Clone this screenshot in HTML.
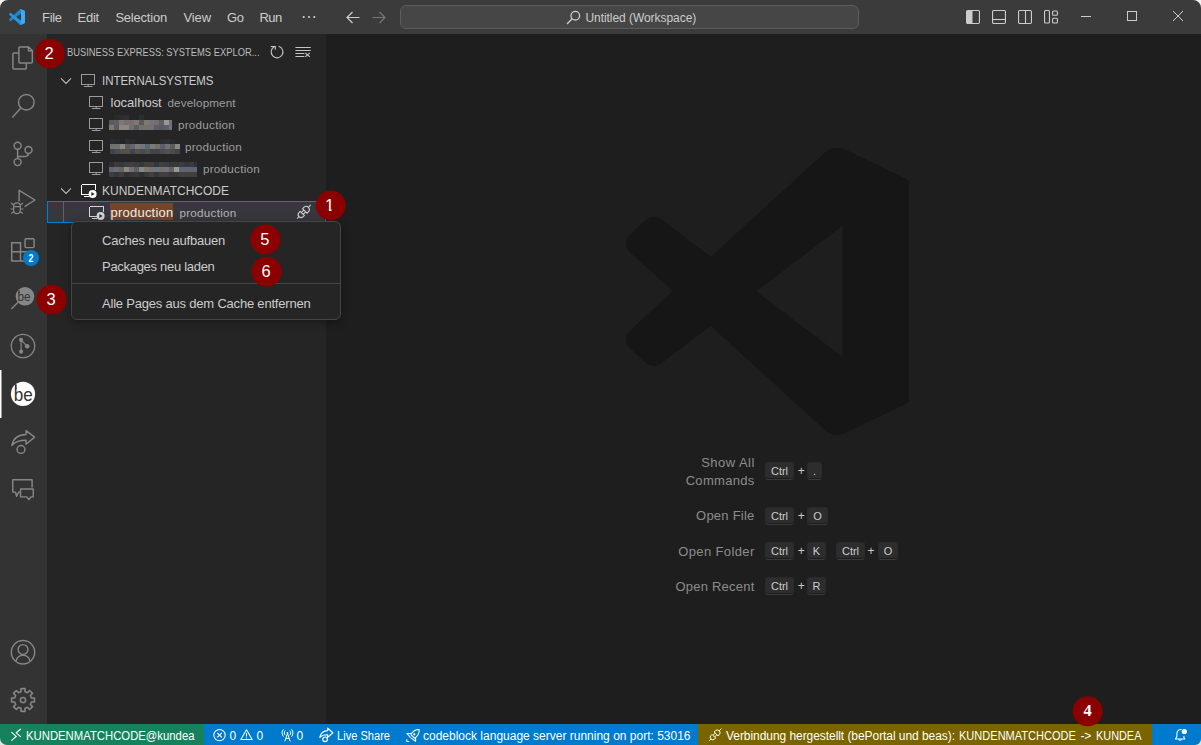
<!DOCTYPE html>
<html lang="en">
<head>
<meta charset="utf-8">
<title>Untitled (Workspace)</title>
<style>
*{box-sizing:border-box;margin:0;padding:0}
html,body{width:1201px;height:745px;overflow:hidden;background:#1e1e1e}
body{font-family:"Liberation Sans",sans-serif;font-size:13px;color:#ccc;position:relative;-webkit-font-smoothing:antialiased}
.abs,.t{position:absolute;white-space:pre}
.t{line-height:1}
svg{position:absolute;overflow:visible}
#titlebar{position:absolute;left:0;top:0;width:1201px;height:34px;background:#3b3b3b}
#activity{position:absolute;left:0;top:34px;width:47px;height:690px;background:#333333}
#sidebar{position:absolute;left:47px;top:34px;width:279px;height:690px;background:#252526}
#editor{position:absolute;left:326px;top:34px;width:875px;height:690px;background:#1e1e1e}
#status{position:absolute;left:0;top:724px;width:1201px;height:21px;background:#007acc;color:#fff;font-size:12px}
.menu{font-size:13px;color:#cccccc}
.key{position:absolute;height:18px;border-radius:3px;background:#2d2d2d;border:1px solid #2a2a2a;border-bottom-color:#3a3a3a;box-shadow:inset 0 -1px 0 rgba(0,0,0,.36);font-size:11px;color:#ccc;text-align:center;line-height:16px}
.plus{position:absolute;font-size:12px;color:#ccc;line-height:1}
.wl{position:absolute;color:#8c8c8c;font-size:13px;line-height:1;white-space:pre}
.desc{color:#9d9d9d;font-size:11.7px}
</style>
</head>
<body>
<!-- TITLEBAR -->
<div id="titlebar">
<svg style="left:9px;top:9px" width="16" height="16" viewBox="0 0 100 100"><path d="M96.4614 10.7962L75.8569 0.875542C73.4719 -0.272773 70.6217 0.211611 68.75 2.08333L1.29858 63.5832C-0.515693 65.2373 -0.513607 68.0937 1.30308 69.7452L6.81272 74.754C8.29793 76.1042 10.5347 76.2036 12.1338 74.9905L93.3609 13.3699C96.086 11.3026 100 13.2462 100 16.6667V16.4275C100 14.0265 98.6246 11.8378 96.4614 10.7962Z" fill="#1f84cc"/><path d="M96.4614 89.2038L75.8569 99.1245C73.4719 100.273 70.6217 99.7884 68.75 97.9167L1.29858 36.4169C-0.515693 34.7627 -0.513607 31.9063 1.30308 30.2548L6.81272 25.246C8.29793 23.8958 10.5347 23.7964 12.1338 25.0095L93.3609 86.6301C96.086 88.6974 100 86.7538 100 83.3334V83.5726C100 85.9735 98.6246 88.1622 96.4614 89.2038Z" fill="#2196e6"/><path d="M75.8578 99.1263C73.4721 100.274 70.6219 99.7885 68.75 97.9166C71.0564 100.223 75 98.5895 75 95.3278V4.67213C75 1.41039 71.0564 -0.223106 68.75 2.08329C70.6219 0.211402 73.4721 -0.273666 75.8578 0.873633L96.4587 10.7807C98.6234 11.8217 100 14.0112 100 16.4132V83.5871C100 85.9891 98.6234 88.1786 96.4586 89.2196L75.8578 99.1263Z" fill="#38abff"/></svg>
<span class="t menu" style="left:42px;top:11px;letter-spacing:-.29px">File</span>
<span class="t menu" style="left:77.5px;top:11px;letter-spacing:-.23px">Edit</span>
<span class="t menu" style="left:115.4px;top:11px;letter-spacing:-.21px">Selection</span>
<span class="t menu" style="left:183.5px;top:11px;letter-spacing:-.11px">View</span>
<span class="t menu" style="left:227px;top:11px;letter-spacing:-.47px">Go</span>
<span class="t menu" style="left:259.6px;top:11px;letter-spacing:-.62px">Run</span>
<svg style="left:302px;top:15px" width="14" height="4" viewBox="0 0 14 4"><circle cx="1.7" cy="2" r="1.1" fill="#ccc"/><circle cx="7" cy="2" r="1.1" fill="#ccc"/><circle cx="12.3" cy="2" r="1.1" fill="#ccc"/></svg>
<svg style="left:346px;top:11px" width="14" height="13" viewBox="0 0 14 13" fill="none" stroke="#cccccc" stroke-width="1.2"><path d="M6.5 1 L1 6.5 L6.5 12 M1 6.5 H13.5"/></svg>
<svg style="left:372px;top:11px" width="14" height="13" viewBox="0 0 14 13" fill="none" stroke="#777" stroke-width="1.2"><path d="M7.5 1 L13 6.5 L7.5 12 M13 6.5 H.5"/></svg>
<div class="abs" style="left:400px;top:5px;width:459px;height:24px;background:#464646;border:1px solid #5c5c5c;border-radius:6px"></div>
<svg style="left:566px;top:10px" width="15" height="15" viewBox="0 0 15 15" fill="none" stroke="#cccccc" stroke-width="1.3"><circle cx="9.3" cy="5.7" r="4.3"/><path d="M6.2 8.8 L1 14"/></svg>
<span class="t" style="left:585.4px;top:12px;font-size:12px;color:#cccccc;letter-spacing:-.05px">Untitled (Workspace)</span>
<svg style="left:966px;top:10px" width="14" height="14" viewBox="0 0 14 14" fill="none" stroke="#cccccc" stroke-width="1.1"><rect x=".55" y=".55" width="12.9" height="12.9" rx="1.2"/><path d="M1 1 H6.5 V13 H1 Z" fill="#cccccc" stroke="none"/></svg>
<svg style="left:992px;top:10px" width="14" height="14" viewBox="0 0 14 14" fill="none" stroke="#cccccc" stroke-width="1.1"><rect x=".55" y=".55" width="12.9" height="12.9" rx="1.2"/><path d="M.5 9.5 H13.5"/></svg>
<svg style="left:1018px;top:10px" width="14" height="14" viewBox="0 0 14 14" fill="none" stroke="#cccccc" stroke-width="1.1"><rect x=".55" y=".55" width="12.9" height="12.9" rx="1.2"/><path d="M7.5 .5 V13.5"/></svg>
<svg style="left:1044px;top:10px" width="15" height="14" viewBox="0 0 15 14" fill="none" stroke="#cccccc" stroke-width="1.1"><rect x=".55" y=".55" width="4.9" height="12.4" rx="1"/><rect x="8.55" y="1.05" width="4.9" height="4.2" rx="1"/><rect x="8.55" y="8.25" width="4.9" height="4.7" rx="1"/></svg>
<div class="abs" style="left:1081px;top:16px;width:10px;height:1px;background:#cccccc"></div>
<div class="abs" style="left:1127px;top:11px;width:10px;height:10px;border:1px solid #cccccc"></div>
<svg style="left:1173px;top:11px" width="10" height="10" viewBox="0 0 10 10" stroke="#cccccc" stroke-width="1"><path d="M0 0 L10 10 M10 0 L0 10"/></svg>

</div>
<!-- ACTIVITY -->
<div id="activity">
<!--AB0-->
<svg style="left:11px;top:11px" width="24" height="26" viewBox="0 0 24 26" fill="none" stroke="#868686" stroke-width="1.45" stroke-linejoin="round" stroke-linecap="butt" ><path d="M8.9 1.9 H17.6 L21.3 5.6 V17 a1 1 0 0 1 -1 1 H8.9 a1 1 0 0 1 -1 -1 V2.9 a1 1 0 0 1 1 -1 Z M17.4 2 V5.8 H21.2"/><path d="M7.9 8 H2.9 a1 1 0 0 0 -1 1 V23 a1 1 0 0 0 1 1 H14.3 a1 1 0 0 0 1 -1 V18"/></svg>
<svg style="left:11px;top:58px" width="26" height="28" viewBox="0 0 26 28" fill="none" stroke="#868686" stroke-width="1.45" stroke-linejoin="round" stroke-linecap="butt" ><circle cx="15.3" cy="10.2" r="7.8"/><path d="M10 15.8 L1.3 25.4"/></svg>
<svg style="left:11px;top:106px" width="24" height="28" viewBox="0 0 24 28" fill="none" stroke="#868686" stroke-width="1.45" stroke-linejoin="round" stroke-linecap="butt" ><circle cx="6.6" cy="5.7" r="3.5"/><circle cx="17.5" cy="10" r="3.5"/><circle cx="6.6" cy="22.1" r="3.5"/><path d="M6.6 9.2 V18.6 M17.5 13.5 C17.5 16.4 15.5 16.5 13 16.5 H7"/></svg>
<svg style="left:9px;top:154px" width="28" height="28" viewBox="0 0 28 28" fill="none" stroke="#868686" stroke-width="1.45" stroke-linejoin="round" stroke-linecap="butt" ><path d="M10.1 13.4 V2.3 L26 12 L15.6 18.6"/><path d="M8 14.9 c2 0 3.4 1.4 3.4 3.4 v3.2 c0 2.4 -1.4 4.2 -3.4 4.2 s-3.4 -1.8 -3.4 -4.2 v-3.2 c0 -2 1.4 -3.4 3.4 -3.4 Z M4.6 18.6 H11.4 M4.6 17 L2 15 M11.4 17 L14 15 M4.6 21 H1.6 M11.4 21 H14.4 M4.9 23.6 L2.2 25.6 M11.1 23.6 L13.8 25.6" stroke-width="1.2"/></svg>
<svg style="left:10px;top:203px" width="26" height="26" viewBox="0 0 26 26" fill="none" stroke="#868686" stroke-width="1.45" stroke-linejoin="round" stroke-linecap="butt" ><path d="M1.7 5.7 H10.5 V24 H1.7 Z M1.7 14.7 H10.5 M10.5 14.7 H20 V24 H10.5"/><rect x="15.1" y="1.8" width="9" height="8.8" rx="1"/></svg>
<div class="abs" style="left:22.9px;top:216px;width:16px;height:16px;border-radius:50%;background:#007acc;color:#fff;font-size:10.5px;font-weight:bold;text-align:center;line-height:16px"><span style="display:inline-block;transform:scaleX(.84)">2</span></div>
<svg style="left:10px;top:251px" width="28" height="26" viewBox="0 0 28 26"><path d="M8.1 17.2 L1.3 24" stroke="#868686" stroke-width="1.4"/><circle cx="15" cy="11.3" r="9.3" fill="#868686"/><rect x="8.35" y="5.2" width="1.25" height="3" fill="#333333"/><text transform="translate(7.5,15.8) scale(.94,1)" font-family="Liberation Sans, sans-serif" font-size="12.5" fill="#333333">be</text></svg>
<svg style="left:10px;top:299px" width="26" height="26" viewBox="0 0 26 26" fill="none" stroke="#868686" stroke-width="1.45" stroke-linejoin="round" stroke-linecap="butt" ><circle cx="13" cy="13" r="11.7" stroke-width="1.3"/><circle cx="11.1" cy="6.9" r="2.1" fill="#868686" stroke="none"/><circle cx="11.1" cy="18.7" r="2.1" fill="#868686" stroke="none"/><circle cx="17.2" cy="13.3" r="2.3" fill="#868686" stroke="none"/><path d="M11.1 7 V18.6 M11.1 7 L17.2 13.3" stroke-width="1.2"/></svg>
<svg style="left:0;top:336px" width="2" height="48" viewBox="0 0 2 48"><rect x="0" y="0" width="1.5" height="48" fill="#ffffff"/></svg>
<svg style="left:10px;top:347px" width="26" height="26" viewBox="0 0 26 26"><circle cx="13" cy="12.9" r="12.1" fill="#ffffff"/><rect x="4.95" y="3.2" width="1.7" height="5" fill="#333333"/><text transform="translate(3.8,19.6) scale(.95,1)" font-family="Liberation Sans, sans-serif" font-size="18" fill="#333333">be</text></svg>
<svg style="left:10px;top:395px" width="26" height="26" viewBox="0 0 26 26" fill="none" stroke="#868686" stroke-width="1.45" stroke-linejoin="round" stroke-linecap="butt" ><path d="M16.05 5.4 V1.6 L24.6 8.1 L16.05 15.2 V11.2 C9 11.2 5 12.2 1.9 16.5 C3.4 8.5 9 5.4 16.05 5.4 Z" /><circle cx="11" cy="20.4" r="3.9"/></svg>
<svg style="left:12px;top:445px" width="24" height="23" viewBox="0 0 24 23" fill="none" stroke="#868686" stroke-width="1.45" stroke-linejoin="round" stroke-linecap="butt" ><path d="M20.1 8.6 V.75 H.75 V13.1 H3.5 L4.6 17.3 L6.6 13.3 L7.6 12.6"/><path d="M8.55 9.95 H21.25 V17.85 H19 L16.9 20.6 L14.8 17.85 H8.55 Z"/></svg>
<svg style="left:10px;top:605px" width="26" height="27" viewBox="0 0 26 27" fill="none" stroke="#868686" stroke-width="1.45" stroke-linejoin="round" stroke-linecap="butt" ><g transform="translate(0,.55)"><circle cx="13" cy="12.7" r="11.7" stroke-width="1.4"/><circle cx="13" cy="10" r="4.9"/><path d="M5.9 21.7 C7 17.6 10 15.7 13 15.7 S19 17.6 20.1 21.7"/></g></svg>
<svg style="left:10px;top:653px" width="26" height="26" viewBox="0 0 26 26" fill="none" stroke="#868686" stroke-width="1.45" stroke-linejoin="round" stroke-linecap="butt" ><path d="M10.99 1.58 L15.01 1.58 L15.01 4.64 L17.49 5.67 L19.65 3.50 L22.50 6.35 L20.33 8.51 L21.36 10.99 L24.42 10.99 L24.42 15.01 L21.36 15.01 L20.33 17.49 L22.50 19.65 L19.65 22.50 L17.49 20.33 L15.01 21.36 L15.01 24.42 L10.99 24.42 L10.99 21.36 L8.51 20.33 L6.35 22.50 L3.50 19.65 L5.67 17.49 L4.64 15.01 L1.58 15.01 L1.58 10.99 L4.64 10.99 L5.67 8.51 L3.50 6.35 L6.35 3.50 L8.51 5.67 L10.99 4.64 Z" stroke-width="1.6"/><circle cx="13" cy="13" r="2.6" stroke-width="1.5"/></svg>
<!--AB1-->
</div>
<!-- SIDEBAR -->
<div id="sidebar">
<!--SB0-->
<span class="t " style="left:20px;top:12.700000000000003px;letter-spacing:0px;font-size:11px;color:#bbbbbb;transform:scaleX(.851);transform-origin:0 0">BUSINESS EXPRESS: SYSTEMS EXPLOR...</span>
<svg style="left:223px;top:11px" width="14" height="14" viewBox="0 0 14 14" fill="none" stroke="#c5c5c5" stroke-width="1.1"><path d="M8.7 1.3 A5.9 5.9 0 1 1 4.4 1.7"/><path d="M.7 1.55 H5.3 V4.8" /></svg>
<svg style="left:248px;top:12px" width="16" height="12" viewBox="0 0 16 12" fill="none" stroke="#c5c5c5" stroke-width="1"><path d="M.4 1.5 H15.75 M.4 4.5 H15.75 M.4 7.5 H9.3 M.4 10.5 H9.3"/><path d="M10.2 6.9 L14.8 10.9 M14.8 6.9 L10.2 10.9" stroke-width="1.15"/></svg>
<svg style="left:14px;top:43.7px" width="11" height="6" viewBox="0 0 11 6" fill="none" stroke="#c0c0c0" stroke-width="1.05"><path d="M0 .4 L5 5.4 L10 .4"/></svg>
<svg style="left:34px;top:40px" width="15" height="13" viewBox="0 0 15 13" fill="none" stroke="#9b9b9b" stroke-width="1"><rect x=".5" y=".5" width="13.4" height="10" shape-rendering="crispEdges"/><path d="M7.2 11 V12.2 M2.9 12.5 H11.5"/></svg>
<span class="t " style="left:55px;top:40px;letter-spacing:0px;transform:scaleX(.882);transform-origin:0 0">INTERNALSYSTEMS</span>
<svg style="left:42px;top:62px" width="15" height="13" viewBox="0 0 15 13" fill="none" stroke="#9b9b9b" stroke-width="1"><rect x=".5" y=".5" width="13.4" height="10" shape-rendering="crispEdges"/><path d="M7.2 11 V12.2 M2.9 12.5 H11.5"/></svg>
<span class="t " style="left:63.5px;top:62px;letter-spacing:-0.01px;">localhost</span>
<span class="t desc" style="left:120.5px;top:63.099999999999994px;letter-spacing:0.115px;">development</span>
<svg style="left:42px;top:84px" width="15" height="13" viewBox="0 0 15 13" fill="none" stroke="#9b9b9b" stroke-width="1"><rect x=".5" y=".5" width="13.4" height="10" shape-rendering="crispEdges"/><path d="M7.2 11 V12.2 M2.9 12.5 H11.5"/></svg>
<span class="t desc" style="left:131px;top:85.1px;letter-spacing:0.24px;">production</span>
<svg style="left:42px;top:106px" width="15" height="13" viewBox="0 0 15 13" fill="none" stroke="#9b9b9b" stroke-width="1"><rect x=".5" y=".5" width="13.4" height="10" shape-rendering="crispEdges"/><path d="M7.2 11 V12.2 M2.9 12.5 H11.5"/></svg>
<span class="t desc" style="left:138px;top:107.1px;letter-spacing:0.24px;">production</span>
<svg style="left:42px;top:128px" width="15" height="13" viewBox="0 0 15 13" fill="none" stroke="#9b9b9b" stroke-width="1"><rect x=".5" y=".5" width="13.4" height="10" shape-rendering="crispEdges"/><path d="M7.2 11 V12.2 M2.9 12.5 H11.5"/></svg>
<span class="t desc" style="left:156px;top:129.1px;letter-spacing:0.24px;">production</span>
<svg style="left:-47px;top:-34px" width="330" height="200" viewBox="0 0 330 200" shape-rendering="crispEdges"><rect x="114" y="115" width="5" height="5" fill="#2a2a2e"/><rect x="119" y="115" width="5" height="5" fill="#2e2c2c"/><rect x="124" y="115" width="5" height="5" fill="#2c3036"/><rect x="139" y="115" width="5" height="5" fill="#2a2d31"/><rect x="109" y="120" width="5" height="5" fill="#5e5a5c"/><rect x="114" y="120" width="5" height="5" fill="#5a5e68"/><rect x="119" y="120" width="5" height="5" fill="#7c7a6c"/><rect x="124" y="120" width="5" height="5" fill="#7a6c70"/><rect x="129" y="120" width="5" height="5" fill="#7a6c70"/><rect x="134" y="120" width="5" height="5" fill="#7c7a6c"/><rect x="139" y="120" width="5" height="5" fill="#5e5a5c"/><rect x="144" y="120" width="5" height="5" fill="#7c7a6c"/><rect x="149" y="120" width="5" height="5" fill="#6c7480"/><rect x="154" y="120" width="5" height="5" fill="#7a6c70"/><rect x="159" y="120" width="5" height="5" fill="#5a5e68"/><rect x="164" y="120" width="5" height="5" fill="#9a9690"/><rect x="169" y="120" width="3" height="5" fill="#70726e"/><rect x="109" y="125" width="5" height="5" fill="#7c7a6c"/><rect x="114" y="125" width="5" height="5" fill="#5e5a5c"/><rect x="119" y="125" width="5" height="5" fill="#8a8682"/><rect x="124" y="125" width="5" height="5" fill="#8a8682"/><rect x="129" y="125" width="5" height="5" fill="#70726e"/><rect x="134" y="125" width="5" height="5" fill="#5a5e68"/><rect x="139" y="125" width="5" height="5" fill="#70726e"/><rect x="144" y="125" width="5" height="5" fill="#70726e"/><rect x="149" y="125" width="5" height="5" fill="#7a6c70"/><rect x="154" y="125" width="5" height="5" fill="#5a5e68"/><rect x="159" y="125" width="5" height="5" fill="#5e5a5c"/><rect x="164" y="125" width="5" height="5" fill="#5a5e68"/><rect x="169" y="125" width="3" height="5" fill="#6c7480"/><rect x="110" y="139" width="5" height="5" fill="#2a2d31"/><rect x="115" y="139" width="5" height="5" fill="#2a2a2e"/><rect x="125" y="139" width="5" height="5" fill="#2e2c2c"/><rect x="130" y="139" width="5" height="5" fill="#2a2a2e"/><rect x="160" y="139" width="5" height="5" fill="#2a2d31"/><rect x="165" y="139" width="5" height="5" fill="#2c3036"/><rect x="170" y="139" width="5" height="5" fill="#2a2a2e"/><rect x="110" y="144" width="5" height="5" fill="#70726e"/><rect x="115" y="144" width="5" height="5" fill="#70726e"/><rect x="120" y="144" width="5" height="5" fill="#8a8682"/><rect x="125" y="144" width="5" height="5" fill="#5e5a5c"/><rect x="130" y="144" width="5" height="5" fill="#5f6478"/><rect x="135" y="144" width="5" height="5" fill="#7c7a6c"/><rect x="140" y="144" width="5" height="5" fill="#6c7480"/><rect x="145" y="144" width="5" height="5" fill="#5c6670"/><rect x="150" y="144" width="5" height="5" fill="#7c7a6c"/><rect x="155" y="144" width="5" height="5" fill="#70726e"/><rect x="160" y="144" width="5" height="5" fill="#5a5e68"/><rect x="165" y="144" width="5" height="5" fill="#70726e"/><rect x="170" y="144" width="5" height="5" fill="#5e5a5c"/><rect x="175" y="144" width="5" height="5" fill="#868a82"/><rect x="110" y="149" width="5" height="5" fill="#3e4448"/><rect x="115" y="149" width="5" height="5" fill="#484c50"/><rect x="120" y="149" width="5" height="5" fill="#50524e"/><rect x="125" y="149" width="5" height="5" fill="#54504f"/><rect x="130" y="149" width="5" height="5" fill="#42444a"/><rect x="135" y="149" width="5" height="5" fill="#50524e"/><rect x="140" y="149" width="5" height="5" fill="#484c50"/><rect x="145" y="149" width="5" height="5" fill="#50524e"/><rect x="150" y="149" width="5" height="5" fill="#42444a"/><rect x="155" y="149" width="5" height="5" fill="#42444a"/><rect x="160" y="149" width="5" height="5" fill="#4c4c50"/><rect x="165" y="149" width="5" height="5" fill="#54504f"/><rect x="170" y="149" width="5" height="5" fill="#4c4c50"/><rect x="175" y="149" width="5" height="5" fill="#3e4448"/><rect x="109" y="162" width="5" height="5" fill="#2e3034"/><rect x="114" y="162" width="5" height="5" fill="#3c3a3c"/><rect x="119" y="162" width="5" height="5" fill="#36383c"/><rect x="124" y="162" width="5" height="5" fill="#3a3e42"/><rect x="129" y="162" width="5" height="5" fill="#40403e"/><rect x="134" y="162" width="5" height="5" fill="#3a3e42"/><rect x="139" y="162" width="5" height="5" fill="#33363a"/><rect x="144" y="162" width="5" height="5" fill="#40403e"/><rect x="149" y="162" width="5" height="5" fill="#443e3c"/><rect x="154" y="162" width="5" height="5" fill="#33363a"/><rect x="159" y="162" width="5" height="5" fill="#40403e"/><rect x="164" y="162" width="5" height="5" fill="#3a3e42"/><rect x="169" y="162" width="5" height="5" fill="#36383c"/><rect x="174" y="162" width="5" height="5" fill="#36383c"/><rect x="179" y="162" width="5" height="5" fill="#3a3e42"/><rect x="184" y="162" width="5" height="5" fill="#33363a"/><rect x="189" y="162" width="5" height="5" fill="#3c3a3c"/><rect x="194" y="162" width="3" height="5" fill="#2e3034"/><rect x="109" y="167" width="5" height="5" fill="#5f6478"/><rect x="114" y="167" width="5" height="5" fill="#6a6c6c"/><rect x="119" y="167" width="5" height="5" fill="#66605e"/><rect x="124" y="167" width="5" height="5" fill="#868a82"/><rect x="129" y="167" width="5" height="5" fill="#7a6c70"/><rect x="134" y="167" width="5" height="5" fill="#5a5e68"/><rect x="139" y="167" width="5" height="5" fill="#8a8682"/><rect x="144" y="167" width="5" height="5" fill="#7c7a6c"/><rect x="149" y="167" width="5" height="5" fill="#77707a"/><rect x="154" y="167" width="5" height="5" fill="#6c7480"/><rect x="159" y="167" width="5" height="5" fill="#70726e"/><rect x="164" y="167" width="5" height="5" fill="#77707a"/><rect x="169" y="167" width="5" height="5" fill="#66605e"/><rect x="174" y="167" width="5" height="5" fill="#9a9690"/><rect x="179" y="167" width="5" height="5" fill="#5f6478"/><rect x="184" y="167" width="5" height="5" fill="#5f6478"/><rect x="189" y="167" width="5" height="5" fill="#5c6670"/><rect x="194" y="167" width="3" height="5" fill="#5f6478"/><rect x="109" y="172" width="5" height="5" fill="#3a3e42"/><rect x="114" y="172" width="5" height="5" fill="#33363a"/><rect x="119" y="172" width="5" height="5" fill="#3a3e42"/><rect x="124" y="172" width="5" height="5" fill="#2e3034"/><rect x="129" y="172" width="5" height="5" fill="#33363a"/><rect x="134" y="172" width="5" height="5" fill="#36383c"/><rect x="139" y="172" width="5" height="5" fill="#2e3034"/><rect x="144" y="172" width="5" height="5" fill="#36383c"/><rect x="149" y="172" width="5" height="5" fill="#40403e"/><rect x="154" y="172" width="5" height="5" fill="#33363a"/><rect x="159" y="172" width="5" height="5" fill="#443e3c"/><rect x="164" y="172" width="5" height="5" fill="#443e3c"/><rect x="169" y="172" width="5" height="5" fill="#36383c"/><rect x="174" y="172" width="5" height="5" fill="#36383c"/><rect x="179" y="172" width="5" height="5" fill="#443e3c"/><rect x="184" y="172" width="5" height="5" fill="#443e3c"/><rect x="189" y="172" width="5" height="5" fill="#40403e"/><rect x="194" y="172" width="3" height="5" fill="#443e3c"/></svg>
<svg style="left:14px;top:153.7px" width="11" height="6" viewBox="0 0 11 6" fill="none" stroke="#c0c0c0" stroke-width="1.05"><path d="M0 .4 L5 5.4 L10 .4"/></svg>
<svg style="left:34px;top:150px" width="16" height="14" viewBox="0 0 16 14" fill="none"><path d="M.5 .5 H14 V6 M.5 .5 V10.5 H7.5 M3 12.5 H8" stroke="#ffffff" stroke-width="1" shape-rendering="crispEdges"/><circle cx="11.6" cy="10" r="4" fill="#ffffff"/><path d="M10.4 7.9 L13.6 10 L10.4 12.1 Z" fill="#2b2b30"/></svg>
<span class="t " style="left:55px;top:150px;letter-spacing:0px;transform:scaleX(.922);transform-origin:0 0">KUNDENMATCHCODE</span>
<div class="abs" style="left:0px;top:167px;width:279px;height:22px;background:#37373d;border:1px solid #007fd4"></div>
<div class="abs" style="left:16px;top:168px;width:1px;height:20px;background:#626262"></div>
<div class="abs" style="left:63px;top:169px;width:63px;height:17px;background:#74452a"></div>
<svg style="left:42px;top:172px" width="16" height="14" viewBox="0 0 16 14" fill="none"><path d="M.5 .5 H14 V6 M.5 .5 V10.5 H7.5 M3 12.5 H8" stroke="#d4d4d4" stroke-width="1" shape-rendering="crispEdges"/><circle cx="11.6" cy="10" r="4" fill="#d4d4d4"/><path d="M10.4 7.9 L13.6 10 L10.4 12.1 Z" fill="#2b2b30"/></svg>
<span class="t " style="left:63.5px;top:172px;letter-spacing:0.228px;color:#ececec">production</span>
<span class="t desc" style="left:132.5px;top:173.1px;letter-spacing:0.24px;color:#b4b4b6">production</span>
<svg style="left:249px;top:170px" width="16" height="16" viewBox="0 0 16 16" fill="none" stroke="#cfcfcf" stroke-width="1.1"><g transform="translate(7.95,7.75) rotate(45)"><path d="M-3.2 -1.2 H3.2 V-3 A3.2 3.2 0 0 0 -3.2 -3 Z M0 -6.2 V-9.7"/><path d="M-2.9 2.4 H2.9 V4 A2.9 2.9 0 0 1 -2.9 4 Z M0 6.9 V9.7"/><path d="M-1.3 -1.2 V2.4 M1.3 -1.2 V2.4"/></g></svg>
<!--SB1-->
</div>
<!-- EDITOR -->
<div id="editor">
<!--ED0-->
<svg style="left:300.29999999999995px;top:113.0px;overflow:hidden" width="282.7" height="288.7" viewBox="0 0 23.500 24"><path fill="#161616" d="M23.15 2.587L18.21.21a1.494 1.494 0 0 0-1.705.29l-9.46 8.63-4.12-3.128a.999.999 0 0 0-1.276.057L.327 7.261A1 1 0 0 0 .326 8.74L3.899 12 .326 15.26a1 1 0 0 0 .001 1.479L1.65 17.94a.999.999 0 0 0 1.276.057l4.12-3.128 9.46 8.63a1.492 1.492 0 0 0 1.704.29l4.942-2.377A1.5 1.5 0 0 0 24 20.06V3.939a1.5 1.5 0 0 0-.85-1.352zm-5.146 14.861L10.826 12l7.178-5.448v10.896z"/></svg>
<span class="wl" style="right:446.70000000000005px;top:421.5px;letter-spacing:0.453px;margin-right:-0.453px">Show All</span>
<span class="wl" style="right:446.70000000000005px;top:439.5px;letter-spacing:0.316px;margin-right:-0.316px">Commands</span>
<span class="wl" style="right:446.70000000000005px;top:474.79999999999995px;letter-spacing:0.236px;margin-right:-0.236px">Open File</span>
<span class="wl" style="right:446.70000000000005px;top:510.5px;letter-spacing:0.385px;margin-right:-0.385px">Open Folder</span>
<span class="wl" style="right:446.70000000000005px;top:545.8px;letter-spacing:0.217px;margin-right:-0.217px">Open Recent</span>
<div class="key" style="left:439px;top:428px;width:29px">Ctrl</div>
<span class="plus" style="left:471.79999999999995px;top:431px">+</span>
<div class="key" style="left:481px;top:428px;width:15px">.</div>
<div class="key" style="left:439px;top:473px;width:29px">Ctrl</div>
<span class="plus" style="left:471.79999999999995px;top:476px">+</span>
<div class="key" style="left:481px;top:473px;width:21px">O</div>
<div class="key" style="left:439px;top:508px;width:29px">Ctrl</div>
<span class="plus" style="left:471.79999999999995px;top:511px">+</span>
<div class="key" style="left:481px;top:508px;width:19px">K</div>
<div class="key" style="left:439px;top:543px;width:29px">Ctrl</div>
<span class="plus" style="left:471.79999999999995px;top:546px">+</span>
<div class="key" style="left:481px;top:543px;width:19px">R</div>
<div class="key" style="left:510px;top:508px;width:29px">Ctrl</div>
<span class="plus" style="left:541.5px;top:511px">+</span>
<div class="key" style="left:552px;top:508px;width:20px">O</div>
<!--ED1-->
</div>
<!-- STATUS -->
<div id="status">
<!--ST0-->
<div class="abs" style="left:0;top:0;width:204px;height:22px;background:#16825d"></div>
<svg style="left:11px;top:4px" width="11" height="13" viewBox="0 0 11 13" fill="none" stroke="#ffffff" stroke-width="1.1"><path d="M.4 4.2 L5.2 8.4 L.4 12.6"/><path d="M9.8 1 L5.2 4.8 L9.8 8.8"/></svg>
<span class="t" style="left:26.4px;top:6px;transform:scaleX(0.943);transform-origin:0 0">KUNDENMATCHCODE@kundea</span>
<svg style="left:213px;top:5px" width="13" height="13" viewBox="0 0 13 13" fill="none" stroke="#ffffff" stroke-width="1.05"><circle cx="6.5" cy="6.1" r="5.7"/><path d="M4.2 3.8 L8.8 8.4 M8.8 3.8 L4.2 8.4"/></svg>
<span class="t" style="left:229.5px;top:6px;letter-spacing:0px">0</span>
<svg style="left:239px;top:4px" width="15" height="14" viewBox="0 0 15 14" fill="none" stroke="#ffffff" stroke-width="1.05" stroke-linejoin="round"><path d="M7.5 1.7 L13.2 11.5 H1.8 Z"/><path d="M7.5 5 V8.5 M7.5 9.4 V10.5"/></svg>
<span class="t" style="left:256.5px;top:6px;letter-spacing:0px">0</span>
<svg style="left:280.5px;top:5px" width="13" height="13" viewBox="0 0 13 13" fill="none" stroke="#ffffff" stroke-width="1"><path d="M6.5 4.5 L3.8 12.4 M6.5 4.5 L9.2 12.4 M4.9 9.4 H8.1"/><circle cx="6.5" cy="3.9" r=".9" fill="#ffffff" stroke="none"/><path d="M4.3 6.2 A3.1 3.1 0 0 1 4.3 1.6 M8.7 6.2 A3.1 3.1 0 0 0 8.7 1.6 M2.5 7.6 A5.3 5.3 0 0 1 2.5 .3 M10.5 7.6 A5.3 5.3 0 0 0 10.5 .3"/></svg>
<span class="t" style="left:296.4px;top:6px;letter-spacing:0px">0</span>
<svg style="left:319px;top:3px" width="15" height="16" viewBox="0 0 15 16" fill="none" stroke="#ffffff" stroke-width="1.15" stroke-linejoin="round"><path d="M8.7 1.2 V3.6 C4 3.8 1.6 6 .8 10.3 C2.8 8.2 5 7.7 8.7 7.8 V10.4 L13.9 5.8 Z"/><circle cx="6.1" cy="12.3" r="2.3"/></svg>
<span class="t" style="left:336.8px;top:6px;transform:scaleX(0.924);transform-origin:0 0">Live Share</span>
<svg style="left:406px;top:4.5px" width="14" height="14" viewBox="0 0 14 14" fill="none" stroke="#ffffff" stroke-width="1.05" stroke-linejoin="round"><path d="M13.2 .6 C9.6 .5 6.8 2.2 4.9 5.6 L8.5 9.2 C11.8 7.2 13.4 4.4 13.2 .6 Z"/><path d="M5.6 4.4 H.8 L4.6 8.6 M9.6 8.2 V12.2 L5 8.9"/><path d="M.8 10.3 V12.5 H3.2"/><circle cx="8.3" cy="5.3" r="1.1" fill="#ffffff" stroke="none"/></svg>
<span class="t" style="left:423px;top:6px;letter-spacing:0px">codeblock language server running on port: 53016</span>
<div class="abs" style="left:698px;top:0;width:454px;height:22px;background:#7a6400"></div>
<svg style="left:708px;top:3px" width="16" height="16" viewBox="0 0 16 16" fill="none" stroke="#ffffff" stroke-width="1.05"><g transform="translate(7.35,7.7) rotate(45) scale(.887)"><path d="M-3.2 -1.2 H3.2 V-3 A3.2 3.2 0 0 0 -3.2 -3 Z M0 -6.2 V-9.7"/><path d="M-2.9 2.4 H2.9 V4 A2.9 2.9 0 0 1 -2.9 4 Z M0 6.9 V9.7"/><path d="M-1.3 -1.2 V2.4 M1.3 -1.2 V2.4"/></g></svg>
<span class="t" style="left:726px;top:6px;letter-spacing:-0.058px">Verbindung hergestellt (bePortal und beas): </span>
<span class="t" style="left:958.8px;top:6px;transform:scaleX(0.92);transform-origin:0 0">KUNDENMATCHCODE </span>
<span class="t" style="left:1080.5px;top:6px;letter-spacing:-0.15px">-&gt; </span>
<span class="t" style="left:1096.3px;top:6px;transform:scaleX(0.908);transform-origin:0 0">KUNDEA</span>
<svg style="left:1174px;top:4px" width="14" height="14" viewBox="0 0 14 14" fill="none" stroke="#ffffff" stroke-width="1.05" stroke-linejoin="round"><path d="M7.6 1.6 C4.4 1.2 2.9 3.4 2.9 5.6 V8.6 L1.4 11 H10.8 L9.9 9.4 V8"/><path d="M4.9 11.2 C5 12.6 7.2 12.6 7.3 11.2"/><circle cx="10.3" cy="3.6" r="2.6" fill="#ffffff" stroke="none"/></svg>
<!--ST1-->
</div>
<!-- OVERLAYS -->
<!--OV0-->
<div class="abs" id="ctx" style="left:71px;top:221px;width:270px;height:99px;background:#252526;border:1px solid #454545;border-radius:6px;box-shadow:0 2px 8px rgba(0,0,0,.36)"><span class="t" style="left:30px;top:12px;letter-spacing:-.222px">Caches neu aufbauen</span><span class="t" style="left:30px;top:38px;letter-spacing:-.295px">Packages neu laden</span><div class="abs" style="left:0;top:61px;width:268px;height:1px;background:#454545"></div><span class="t" style="left:30px;top:74.8px;letter-spacing:-.202px">Alle Pages aus dem Cache entfernen</span></div>
<svg style="left:32px;top:36px" width="36" height="36" viewBox="0 0 36 36"><circle cx="17.80" cy="17.70" r="15" fill="#8b0000"/><text x="17.20" y="23.30" text-anchor="middle" font-family="Liberation Sans, sans-serif" font-size="16.5" fill="#ffffff" >2</text></svg>
<svg style="left:313px;top:188px" width="36" height="36" viewBox="0 0 36 36"><circle cx="17.75" cy="17.45" r="15" fill="#8b0000"/><text x="16.65" y="23.05" text-anchor="middle" font-family="Liberation Sans, sans-serif" font-size="16.5" fill="#ffffff" >1</text><rect x="12" y="21.2" width="3.85" height="3" fill="#8b0000"/><rect x="18.55" y="21.2" width="4" height="3" fill="#8b0000"/></svg>
<svg style="left:248px;top:222px" width="36" height="36" viewBox="0 0 36 36"><circle cx="17.40" cy="17.46" r="15" fill="#8b0000"/><text x="16.80" y="23.06" text-anchor="middle" font-family="Liberation Sans, sans-serif" font-size="16.5" fill="#ffffff" >5</text></svg>
<svg style="left:249px;top:254px" width="36" height="36" viewBox="0 0 36 36"><circle cx="17.60" cy="17.65" r="15" fill="#8b0000"/><text x="17.00" y="23.25" text-anchor="middle" font-family="Liberation Sans, sans-serif" font-size="16.5" fill="#ffffff" >6</text></svg>
<svg style="left:34px;top:282px" width="36" height="36" viewBox="0 0 36 36"><circle cx="17.60" cy="17.70" r="15" fill="#8b0000"/><text x="17.00" y="23.30" text-anchor="middle" font-family="Liberation Sans, sans-serif" font-size="16.5" fill="#ffffff" >3</text></svg>
<svg style="left:1070px;top:694px" width="36" height="36" viewBox="0 0 36 36"><circle cx="17.70" cy="17.30" r="15" fill="#8b0000"/><text x="17.70" y="22.40" text-anchor="middle" font-family="Liberation Serif, serif" font-size="16.5" fill="#ffffff" font-weight="bold">4</text></svg>
<svg style="left:0;top:0" width="8" height="8" viewBox="0 0 8 8"><path d="M0 0 H8 A8 8 0 0 0 0 8 Z" fill="#f2f2f2"/></svg>
<svg style="left:1193px;top:0" width="8" height="8" viewBox="0 0 8 8"><path d="M8 0 H0 A8 8 0 0 1 8 8 Z" fill="#f2f2f2"/></svg>
<svg style="left:0;top:738px" width="7" height="7" viewBox="0 0 7 7"><path d="M0 7 H7 A7 7 0 0 1 0 0 Z" fill="#e4e4e4"/></svg>
<svg style="left:1195px;top:739px" width="6" height="6" viewBox="0 0 6 6"><path d="M6 6 H0 A6 6 0 0 0 6 0 Z" fill="#e0e0e0"/></svg>
<!--OV1-->
</body>
</html>
